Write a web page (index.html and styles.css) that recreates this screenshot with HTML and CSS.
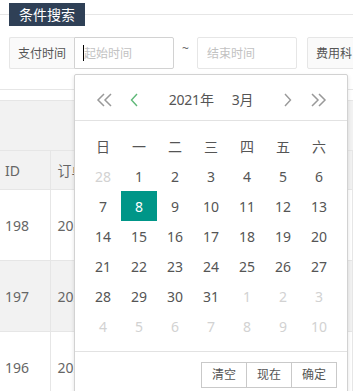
FILE: index.html
```html
<!DOCTYPE html>
<html lang="zh-CN">
<head>
    <meta charset="UTF-8">
    <meta name="viewport" content="width=device-width, initial-scale=1.0">
    <title>条件搜索</title>
    <link rel="stylesheet" href="styles.css">
</head>
<body>
    <div class="page">
        <div class="legend-row">
            <span class="legend">条件搜索</span>
        </div>

        <form class="search-form">
            <span class="addon addon-pay">支付时间</span>
            <span class="input-wrap is-focus">
                <input class="input input-focus" type="text" placeholder="起始时间">
            </span>
            <span class="tilde">~</span>
            <input class="input" type="text" placeholder="结束时间">
            <span class="addon addon-fee">费用科目</span>
        </form>

        <div class="table-box">
            <div class="table-gap"></div>
            <div class="table-tool"></div>
            <table class="data-table">
                <thead>
                    <tr>
                        <th class="col-id"><div class="cell">ID</div></th>
                        <th class="col-no"><div class="cell">订单号</div></th>
                    </tr>
                </thead>
                <tbody>
                    <tr>
                        <td class="col-id"><div class="cell">198</div></td>
                        <td class="col-no"><div class="cell">2021030800198</div></td>
                    </tr>
                    <tr class="row-hover">
                        <td class="col-id"><div class="cell">197</div></td>
                        <td class="col-no"><div class="cell">2021030800197</div></td>
                    </tr>
                    <tr>
                        <td class="col-id"><div class="cell">196</div></td>
                        <td class="col-no"><div class="cell">2021030700196</div></td>
                    </tr>
                </tbody>
            </table>
        </div>

        <!-- date picker dropdown -->
        <div class="laydate">
            <div class="laydate-header">
                <svg class="ico ico-prev-y" width="17" height="14" viewBox="0 0 17 14">
                    <path d="M8 1 L2 7 L8 13 M15 1 L9 7 L15 13" fill="none" stroke="#999" stroke-width="1.5"/>
                </svg>
                <svg class="ico ico-prev-m" width="8" height="14" viewBox="0 0 8 14">
                    <path d="M7 1 L1.5 7 L7 13" fill="none" stroke="#5FB878" stroke-width="1.4"/>
                </svg>
                <div class="laydate-ym">
                    <span>2021年</span><span>3月</span>
                </div>
                <svg class="ico ico-next-m" width="8" height="14" viewBox="0 0 8 14">
                    <path d="M1 1 L6.5 7 L1 13" fill="none" stroke="#999" stroke-width="1.4"/>
                </svg>
                <svg class="ico ico-next-y" width="17" height="14" viewBox="0 0 17 14">
                    <path d="M2 1 L8 7 L2 13 M9 1 L15 7 L9 13" fill="none" stroke="#999" stroke-width="1.5"/>
                </svg>
            </div>

            <div class="laydate-content">
                <table class="laydate-table">
                    <thead>
                        <tr><th>日</th><th>一</th><th>二</th><th>三</th><th>四</th><th>五</th><th>六</th></tr>
                    </thead>
                    <tbody>
                        <tr><td class="other">28</td><td>1</td><td>2</td><td>3</td><td>4</td><td>5</td><td>6</td></tr>
                        <tr><td>7</td><td class="this">8</td><td>9</td><td>10</td><td>11</td><td>12</td><td>13</td></tr>
                        <tr><td>14</td><td>15</td><td>16</td><td>17</td><td>18</td><td>19</td><td>20</td></tr>
                        <tr><td>21</td><td>22</td><td>23</td><td>24</td><td>25</td><td>26</td><td>27</td></tr>
                        <tr><td>28</td><td>29</td><td>30</td><td>31</td><td class="other">1</td><td class="other">2</td><td class="other">3</td></tr>
                        <tr><td class="other">4</td><td class="other">5</td><td class="other">6</td><td class="other">7</td><td class="other">8</td><td class="other">9</td><td class="other">10</td></tr>
                    </tbody>
                </table>
            </div>

            <div class="laydate-footer">
                <span class="btn">清空</span>
                <span class="btn">现在</span>
                <span class="btn">确定</span>
            </div>
        </div>
    </div>
</body>
</html>
```

FILE: styles.css
```css
*{
    box-sizing: border-box;
}
body{
    margin: 0;
    padding: 0;
    background: #fff;
    font-family: "Noto Sans", "Noto Sans CJK SC", sans-serif;
    color: #666;
}

.page{
    position: relative;
    width: 353px;
    height: 391px;
    overflow: hidden;
}

/* legend line */
.legend-row{
    display: flex;
    align-items: center;
    margin-top: 3px;
}
.legend-row::before,
.legend-row::after{
    content: "";
    height: 1px;
    background: #e6e6e6;
}
.legend-row::before{
    width: 9px;
}
.legend-row::after{
    flex: 1;
}
.legend{
    height: 23px;
    line-height: 23px;
    padding: 0 10px;
    font-size: 14px;
    color: #fff;
    background: #2F4056;
}

/* search form */
.search-form{
    display: flex;
    align-items: stretch;
    height: 32px;
    margin: 11px 0 0;
    padding-left: 9px;
    font-size: 12px;
    white-space: nowrap;
}
.addon{
    display: flex;
    align-items: center;
    flex-shrink: 0;
    padding: 0 8px;
    color: #555;
    background: #fafafa;
    border: 1px solid #e6e6e6;
    border-radius: 2px;
}
.addon-pay{
    width: 65px;
    justify-content: center;
    border-right: none;
    border-radius: 2px 0 0 2px;
}
.addon-fee{
    margin-left: 10px;
}
.input{
    width: 100px;
    flex-shrink: 0;
    height: 32px;
    padding: 0 9px;
    font-family: inherit;
    font-size: 12px;
    color: #333;
    border: 1px solid #e6e6e6;
    border-radius: 2px;
    outline: none;
}
.input::placeholder{
    color: #c2c2c2;
}
.input-wrap{
    position: relative;
    display: block;
    flex-shrink: 0;
}
/* text caret of the focused field */
.input-wrap.is-focus::after{
    content: "";
    position: absolute;
    left: 9px;
    top: 8px;
    width: 1px;
    height: 16px;
    background: #000;
}
.input-focus{
    border-color: #d2d2d2;
    border-radius: 0 2px 2px 0;
}
.tilde{
    width: 23px;
    flex-shrink: 0;
    text-align: center;
    line-height: 24px;
    color: #666;
}

/* table */
.table-box{
    margin-top: 20px;
    border-top: 1px solid #e6e6e6;
}
.table-gap{
    height: 10px;
}
.table-tool{
    height: 50px;
    background: #f2f2f2;
    border-top: 1px solid #e6e6e6;
}
.data-table{
    width: 100%;
    border-collapse: collapse;
    font-size: 14px;
    color: #666;
}
.data-table th,
.data-table td{
    padding: 0;
    text-align: left;
    font-weight: normal;
    white-space: nowrap;
    border-top: 1px solid #e6e6e6;
    border-right: 1px solid #e6e6e6;
}
.data-table th{
    height: 39px;
    background: #f2f2f2;
}
.data-table td{
    height: 71px;
}
.data-table .cell{
    padding: 0 5px;
    overflow: hidden;
}
.data-table .col-id{
    width: 50px;
}
.data-table .col-no .cell{
    width: 34px;
    padding: 0 0 0 7px;
}
.row-hover td{
    background: #f2f2f2;
}

/* date picker */
.laydate{
    position: absolute;
    left: 74px;
    top: 74px;
    width: 274px;
    background: #fff;
    border: 1px solid #d2d2d2;
    border-radius: 2px;
    box-shadow: 0 2px 4px rgba(0,0,0,.12);
    font-size: 14px;
}
.laydate-header{
    display: flex;
    align-items: center;
    padding: 10px 20px 5px 21px;
    height: 46px;
    border-bottom: 1px solid #e2e2e2;
}
.ico{
    flex-shrink: 0;
    display: block;
}
.ico-prev-y{
    margin-right: 17px;
}
.ico-next-y{
    margin-left: 18px;
}
.laydate-ym{
    flex: 1;
    text-align: center;
    line-height: 30px;
    color: #555;
    letter-spacing: -0.2px;
}
.laydate-ym span{
    padding: 0 9px;
}

.laydate-content{
    padding: 10px;
}
.laydate-table{
    border-collapse: collapse;
    border-spacing: 0;
}
.laydate-table th,
.laydate-table td{
    width: 36px;
    height: 30px;
    padding: 0;
    text-align: center;
    font-weight: normal;
    color: #555;
}
.laydate-table td.other{
    color: #d2d2d2;
}
.laydate-table td.this{
    background: #009688;
    color: #fff;
}

.laydate-footer{
    display: flex;
    justify-content: flex-end;
    height: 46px;
    padding: 10px 10px;
    border-top: 1px solid #e2e2e2;
}
.btn{
    height: 26px;
    line-height: 24px;
    padding: 0 10px;
    margin-left: -1px;
    font-size: 12px;
    color: #555;
    background: #fff;
    border: 1px solid #C9C9C9;
}
```
